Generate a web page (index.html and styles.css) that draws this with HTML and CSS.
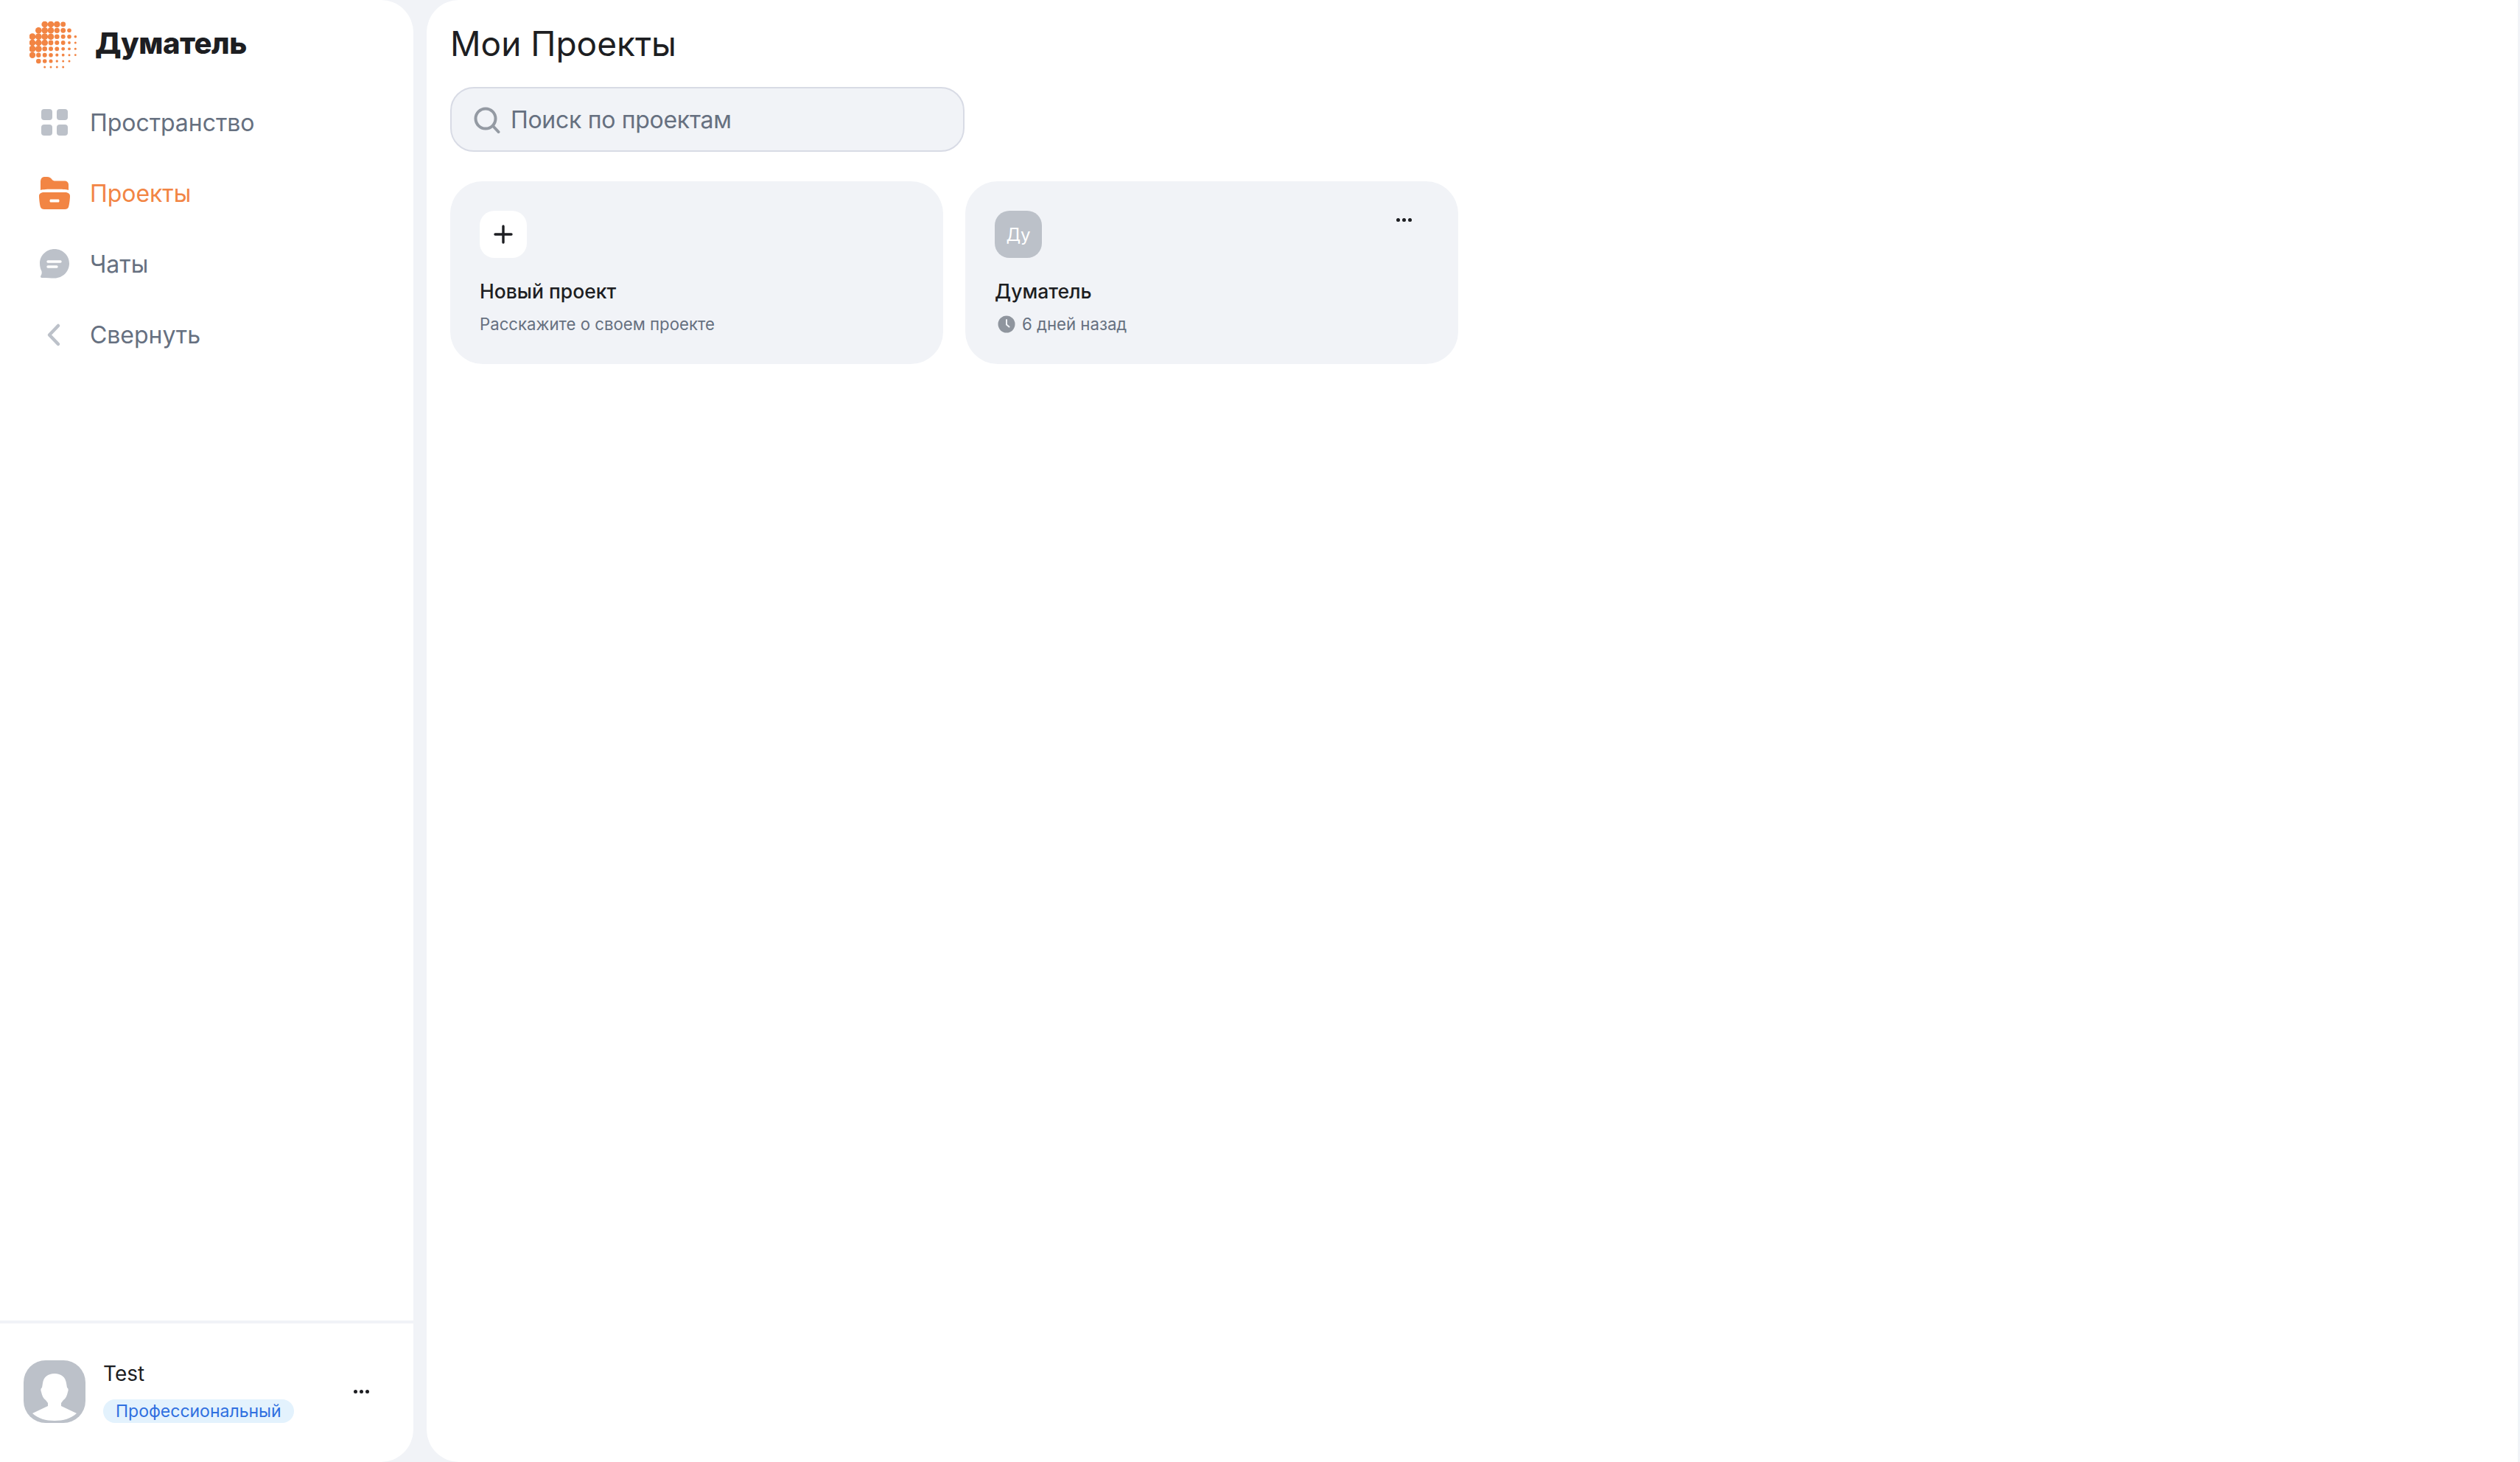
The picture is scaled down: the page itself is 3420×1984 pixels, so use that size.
FILE: index.html
```html
<!DOCTYPE html>
<html lang="ru">
<head>
<meta charset="utf-8">
<title>Думатель — Мои Проекты</title>
<link rel="stylesheet" href="styles.css">
</head>
<body>
<div class="app">
  <aside class="sidebar">
    <div class="brand">
      <svg class="brand-logo" width="64" height="64" viewBox="0 0 64 64" fill="#f28544">
        <circle cx="20.7" cy="4" r="4.3"/><circle cx="29" cy="4" r="4.3"/><circle cx="37.3" cy="4" r="4.3"/><circle cx="45.7" cy="4" r="3.4"/>
        <circle cx="12.3" cy="12.3" r="4.3"/><circle cx="20.7" cy="12.3" r="4.3"/><circle cx="29" cy="12.3" r="4.3"/><circle cx="37.3" cy="12.3" r="3.6"/><circle cx="45.7" cy="12.3" r="3.4"/><circle cx="54" cy="12.3" r="2.8"/>
        <circle cx="4" cy="20.7" r="4.4"/><circle cx="12.3" cy="20.7" r="4.4"/><circle cx="20.7" cy="20.7" r="4.4"/><circle cx="29" cy="20.7" r="4.3"/><circle cx="37.3" cy="20.7" r="3.3"/><circle cx="45.7" cy="20.7" r="3"/><circle cx="54" cy="20.7" r="2.8"/><circle cx="62.3" cy="20.7" r="1.8"/>
        <circle cx="4" cy="29" r="4.4"/><circle cx="12.3" cy="29" r="4.4"/><circle cx="20.7" cy="29" r="4.3"/><circle cx="29" cy="29" r="3.4"/><circle cx="37.3" cy="29" r="3"/><circle cx="45.7" cy="29" r="2.9"/><circle cx="54" cy="29" r="1.9"/><circle cx="62.3" cy="29" r="1.5"/>
        <circle cx="4" cy="37.3" r="4.5"/><circle cx="12.3" cy="37.3" r="4.4"/><circle cx="20.7" cy="37.3" r="3.3"/><circle cx="29" cy="37.3" r="3"/><circle cx="37.3" cy="37.3" r="2.9"/><circle cx="45.7" cy="37.3" r="2.4"/><circle cx="54" cy="37.3" r="1.9"/><circle cx="62.3" cy="37.3" r="1.5"/>
        <circle cx="4" cy="45.7" r="4.2"/><circle cx="12.3" cy="45.7" r="3.2"/><circle cx="20.7" cy="45.7" r="3"/><circle cx="29" cy="45.7" r="2.8"/><circle cx="37.3" cy="45.7" r="2.1"/><circle cx="45.7" cy="45.7" r="1.9"/><circle cx="54" cy="45.7" r="1.5"/><circle cx="62.3" cy="45.7" r="1.4"/>
        <circle cx="12.3" cy="54" r="3.3"/><circle cx="20.7" cy="54" r="2.8"/><circle cx="29" cy="54" r="2.5"/><circle cx="37.3" cy="54" r="1.7"/><circle cx="45.7" cy="54" r="1.5"/><circle cx="54" cy="54" r="1.5"/>
        <circle cx="20.7" cy="62" r="1.5"/><circle cx="29" cy="62" r="1.5"/><circle cx="37.3" cy="62" r="1.5"/><circle cx="45.7" cy="62" r="1.5"/>
      </svg>
      <span class="brand-name">Думатель</span>
    </div>
    <nav class="nav">
      <a class="nav-item">
        <svg class="nav-icon" width="44" height="44" viewBox="0 0 44 44" fill="#bcc1c9">
          <rect x="4" y="4" width="15" height="15" rx="4"/><rect x="25" y="4" width="15" height="15" rx="4"/><rect x="4" y="25" width="15" height="15" rx="4"/><rect x="25" y="25" width="15" height="15" rx="4"/>
        </svg>
        <span>Пространство</span>
      </a>
      <a class="nav-item nav-item-active">
        <svg class="nav-icon" width="44" height="44" viewBox="0 0 44 44" fill="#f28544">
          <path d="M3 18V7C3 3.700 4.500 0 8 0H12C15 0 17 1.500 18.500 3.500C19.500 5 21 5.500 23 5.500H35C39 5.500 41 7.500 41 11V18C37 17 33 16.800 22 16.800C11 16.800 7 17 3 18Z"/>
          <path d="M8 21H36C40 21 43 22.500 43 26C43 30 42 38 41 41C40.300 43 38.500 44 36 44H8C5.500 44 3.700 43 3 41C2 38 1 30 1 26C1 22.500 4 21 8 21ZM17 30.500C16 30.500 15.500 31 15.500 32.500C15.500 34 16 34.500 17 34.500H27C28 34.500 28.500 34 28.500 32.500C28.500 31 28 30.500 27 30.500Z" fill-rule="evenodd"/>
        </svg>
        <span>Проекты</span>
      </a>
      <a class="nav-item">
        <svg class="nav-icon" width="44" height="44" viewBox="0 0 44 44">
          <path d="M22 2C33 2 42 10.500 42 21.500C42 32.500 33 41.500 22 41.500C17 41.500 12 41 5 41C3 41 2.500 39.500 3.500 38C4.500 36.500 5 34.500 4.500 32C3 29 2 25.500 2 21.500C2 10.500 11 2 22 2Z" fill="#bcc1c9"/>
          <path d="M13 19H30M13 26H25" fill="none" stroke="#fff" stroke-width="3.400" stroke-linecap="round"/>
        </svg>
        <span>Чаты</span>
      </a>
      <a class="nav-item">
        <svg class="nav-icon" width="44" height="44" viewBox="0 0 44 44">
          <path d="M27 10L15 22.500L27 35" fill="none" stroke="#bcc1c9" stroke-width="4.500" stroke-linecap="round" stroke-linejoin="round"/>
        </svg>
        <span>Свернуть</span>
      </a>
    </nav>
    <div class="account">
      <svg class="avatar" width="84" height="85" viewBox="0 0 84 85">
        <rect width="84" height="85" rx="30" fill="#bcc1c9"/>
        <path d="M42 18C33 18 27 23 26 31L25 37C23 38 23 41 24 43C25 48 27 52 30 54L33 58V62L12 72C20 79 30 82 42 82C54 82 64 79 72 72L51 62V58L54 54C57 52 59 48 60 43C61 41 61 38 59 37L58 31C57 23 51 18 42 18Z" fill="#fff"/>
      </svg>
      <div class="account-info">
        <div class="account-name">Test</div>
        <span class="plan-badge">Профессиональный</span>
      </div>
      <span class="dots account-dots"><i></i><i></i><i></i></span>
    </div>
  </aside>
  <main class="main">
    <h1 class="page-title">Мои Проекты</h1>
    <div class="search">
      <svg class="search-icon" width="36" height="36" viewBox="0 0 36 36" fill="none" stroke="#949aa3" stroke-width="4" stroke-linecap="round">
        <circle cx="16" cy="16" r="13.500"/><path d="M26 26L33.500 34"/>
      </svg>
      <span>Поиск по проектам</span>
    </div>
    <section class="cards">
      <article class="card">
        <div class="tile tile-new">
          <svg width="28" height="28" viewBox="0 0 28 28" stroke="#1d1e22" stroke-width="3.400" stroke-linecap="round"><path d="M14 3V25M3 14H25"/></svg>
        </div>
        <h2 class="card-title">Новый проект</h2>
        <p class="card-meta">Расскажите о своем проекте</p>
      </article>
      <article class="card">
        <div class="tile tile-project">Ду</div>
        <span class="dots card-dots"><i></i><i></i><i></i></span>
        <h2 class="card-title">Думатель</h2>
        <p class="card-meta card-meta-time">
          <svg width="24" height="24" viewBox="0 0 24 24"><circle cx="12" cy="12" r="11.500" fill="#8f959e"/><path d="M12 6V12.500L15.500 15.500" fill="none" stroke="#f1f3f7" stroke-width="2" stroke-linecap="round"/></svg>
          <span>6 дней назад</span>
        </p>
      </article>
    </section>
  </main>
</div>
</body>
</html>
```

FILE: styles.css
```css
* { box-sizing: border-box; }

html, body { height: 100%; }

body {
  margin: 0;
  background: #f1f3f7;
  font-family: Inter, "Noto Sans", sans-serif;
  color: #1d1e22;
}

.app {
  display: flex;
  gap: 18px;
  height: 100vh;
  padding-right: 3px;
}

.sidebar {
  display: flex;
  flex-direction: column;
  flex: 0 0 561px;
  background: #fff;
  border-radius: 0 44px 44px 0;
}

.brand {
  display: flex;
  align-items: center;
  gap: 25px;
  height: 118px;
  padding: 0 0 0 40px;
}

.brand-logo { display: block; flex: none; margin-top: 3px; }

.brand-name {
  font-size: 40px;
  font-weight: 800;
  letter-spacing: -0.5px;
  line-height: 1;
  color: #1d1e22;
}

.nav { display: flex; flex-direction: column; flex: 1; padding-left: 52px; }

.nav-item {
  display: flex;
  align-items: center;
  gap: 26px;
  height: 96px;
  font-size: 32px;
  letter-spacing: -0.05px;
  font-weight: 400;
  color: #667080;
}

.nav-icon { display: block; flex: none; }

.nav-item-active { color: #f28544; }

.account {
  display: flex;
  align-items: center;
  flex: none;
  height: 192px;
  padding: 0 0 4px 32px;
  border-top: 4px solid #f1f3f7;
}

.avatar { display: block; flex: none; margin-right: 24px; }

.account-info { display: flex; flex-direction: column; align-items: flex-start; flex: 1; gap: 17px; }

.account-name { font-size: 28px; line-height: 36px; color: #1d1e22; }

.plan-badge {
  height: 32px;
  padding: 0 17px;
  border-radius: 16px;
  background: #e3f2fd;
  color: #2f6fe0;
  font-size: 23px;
  line-height: 32px;
}

.dots { display: flex; gap: 3px; }

.dots i { width: 5px; height: 5px; border-radius: 50%; background: #1d1e22; }

.account-dots { margin-right: 60px; }

.main {
  flex: 1;
  padding: 0 32px;
  background: #fff;
  border-radius: 44px 0 0 44px;
}

.page-title {
  margin: 0;
  height: 118px;
  font-size: 46px;
  font-weight: 400;
  line-height: 118px;
  color: #1d1e22;
}

.search {
  display: flex;
  align-items: center;
  gap: 14px;
  width: 698px;
  height: 88px;
  padding-left: 30px;
  background: #f1f3f7;
  border: 2px solid #d8dbe5;
  border-radius: 32px;
  font-size: 32px;
  letter-spacing: -0.3px;
  color: #667080;
}

.search-icon { flex: none; margin-top: 2px; }

.cards { display: flex; gap: 30px; margin-top: 40px; }

.card {
  position: relative;
  width: 669px;
  height: 248px;
  padding: 40px;
  background: #f1f3f7;
  border-radius: 44px;
}

.tile {
  display: flex;
  align-items: center;
  justify-content: center;
  width: 64px;
  height: 64px;
  border-radius: 20px;
}

.tile-new { background: #fff; }

.tile-project { background: #bcc1c9; color: #fff; font-size: 24px; }

.card-title {
  margin: 27px 0 0;
  font-size: 26.500px;
  font-weight: 500;
  line-height: 36px;
  color: #1d1e22;
}

.card-meta {
  margin: 11px 0 0;
  font-size: 22.200px;
  line-height: 32px;
  color: #667080;
}

.card-meta-time { display: flex; align-items: center; gap: 9px; padding-left: 4px; }

.card-meta-time svg { display: block; flex: none; }

.card-dots { position: absolute; top: 50px; right: 63px; }
```
